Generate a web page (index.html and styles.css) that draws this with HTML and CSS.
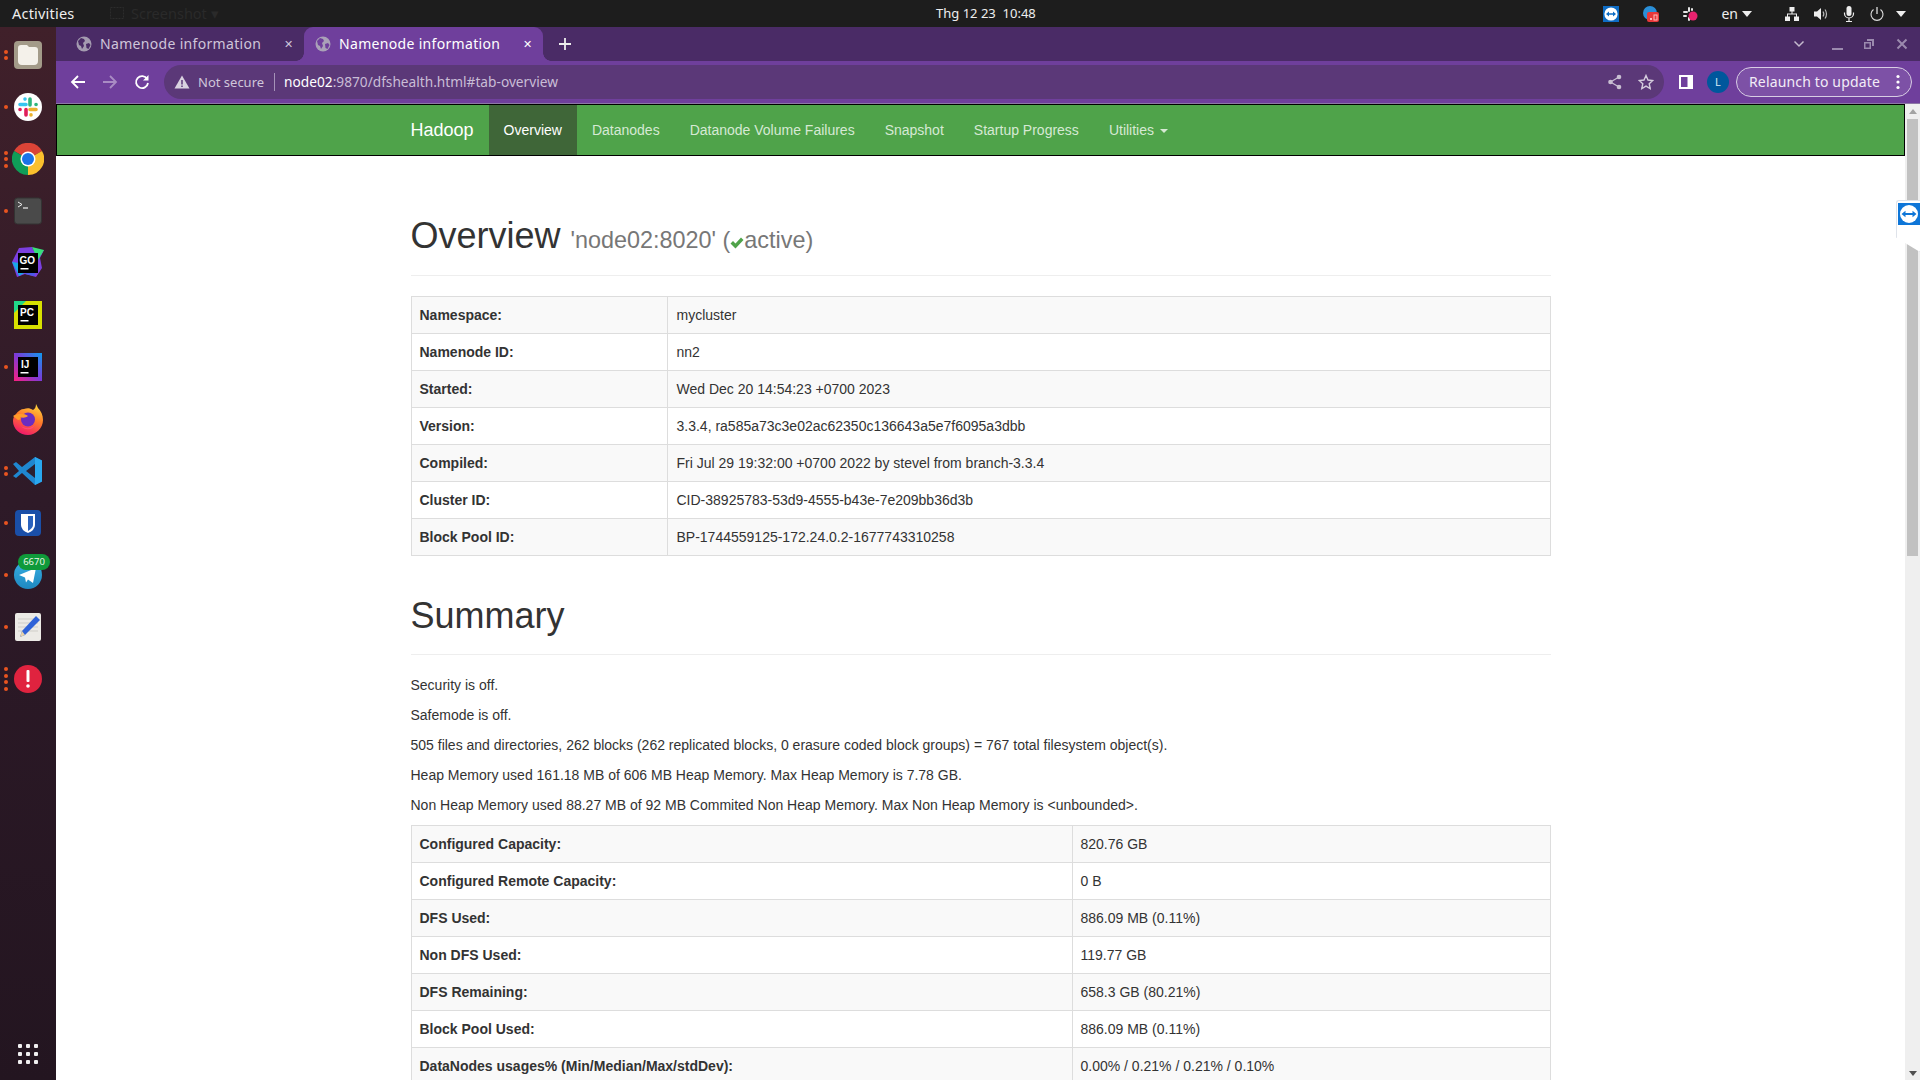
FILE: index.html
```html
<!DOCTYPE html>
<html lang="en">
<head>
    <meta charset="UTF-8">
    <title>Namenode information</title>
    <link rel="stylesheet" href="styles.css">
</head>
<body>
    <!-- gnome top bar -->
    <div class="topbar">
        <div class="top-left">
            <span class="activities">Activities</span>
            <span class="ghost-app">
                <svg width="16" height="16" viewBox="0 0 16 16"><rect x="1.5" y="2.5" width="13" height="11" fill="none" stroke="#2c2c2c" stroke-dasharray="2 1"/></svg>
                Screenshot &#9662;
            </span>
        </div>
        <div class="clock">Thg 12 23&nbsp;&nbsp;10:48</div>
        <div class="tray">
            <svg class="tray-tv" width="16" height="16" viewBox="0 0 16 16"><rect width="16" height="16" fill="#0e6cc4"/><circle cx="8" cy="8" r="6.6" fill="#fff"/><path d="M3 8l3-2.4v1.6h4V5.6L13 8l-3 2.4V8.800H6v1.600z" fill="#0e6cc4"/></svg>
            <svg class="tray-chat" width="16" height="18" viewBox="0 0 16 18"><circle cx="7" cy="8" r="7" fill="#2a8fd8"/><rect x="4" y="7" width="12" height="10" rx="2" fill="#e8383a"/><rect x="7" y="13" width="2" height="2" fill="#fbb"/><rect x="11" y="10" width="3" height="5" fill="none" stroke="#fbb"/></svg>
            <svg class="tray-slack" width="16" height="16" viewBox="0 0 16 16"><g fill="#e6e6e6"><rect x="1" y="5" width="5" height="2" rx="1"/><rect x="6" y="1" width="2" height="5" rx="1"/><rect x="1" y="9" width="4" height="2" rx="1"/><rect x="6" y="11" width="2" height="4" rx="1"/><rect x="9" y="2" width="2" height="3" rx="1"/></g><circle cx="11" cy="10" r="4.500" fill="#e8226e"/></svg>
            <span class="lang">en</span><span class="caret-w lang-caret"></span>
            <svg class="tray-net" width="16" height="16" viewBox="0 0 16 16" fill="#eee"><rect x="5.500" y="1" width="5" height="4.500"/><rect x="1" y="10.500" width="5" height="4.500"/><rect x="10" y="10.500" width="5" height="4.500"/><path d="M7.500 5h1v2.500H13V11h-1V8.500H4V11H3V7.500h4.500z"/></svg>
            <svg class="tray-sound" width="16" height="16" viewBox="0 0 16 16"><path d="M1 5.500h3L8 2v12l-4-3.500H1z" fill="#eee"/><path d="M10 5.500c1 1.500 1 3.500 0 5M12 3.500c2 2.500 2 6.500 0 9" fill="none" stroke="#bbb" stroke-width="1.200"/></svg>
            <svg class="tray-mic" width="14" height="18" viewBox="0 0 14 18"><rect x="4.500" y="1" width="5" height="10" rx="2.500" fill="#eee"/><path d="M2.500 7.500v1a4.500 4.500 0 0 0 9 0v-1M7 13v3.500M4 16.500h6" fill="none" stroke="#eee" stroke-width="1.200"/></svg>
            <svg class="tray-power" width="16" height="16" viewBox="0 0 16 16"><path d="M4.500 3.500a6 6 0 1 0 7 0" fill="none" stroke="#ddd" stroke-width="1.100"/><path d="M8 1v7" stroke="#eee" stroke-width="1.200"/></svg>
            <span class="caret-w power-caret"></span>
        </div>
    </div>

    <div class="desktop">
        <!-- launcher -->
        <nav class="dock">
            <div class="dock-item">
                <div class="dots"><i></i><i></i></div>
                <svg width="32" height="32" viewBox="0 0 32 32"><rect x="2" y="2" width="28" height="28" rx="4" fill="#a39b89"/><path d="M6 9q0-3 3-3h6l2 2h6q3 0 3 3v11q0 4-4 4H10q-4 0-4-4z" fill="#f4f1ea"/></svg>
            </div>
            <div class="dock-item">
                <div class="dots"><i></i></div>
                <svg width="32" height="32" viewBox="0 0 32 32"><circle cx="16" cy="16" r="14" fill="#fff"/><g stroke-width="3.600" stroke-linecap="round"><path d="M8 13.500h6M13 8v.1" stroke="#36c5f0"/><path d="M18 8v6M24 13.500h.1" stroke="#2eb67d"/><path d="M24 18.500h-6M19 24v-.1" stroke="#ecb22e"/><path d="M14 18.500V24M8 18.500h.1" stroke="#e01e5a"/></g></svg>
            </div>
            <div class="dock-item">
                <div class="dots"><i></i><i></i><i></i></div>
                <svg width="32" height="32" viewBox="0 0 32 32"><path d="M16 16L2.100 8A16 16 0 0 1 30 8z" fill="#db4437"/><path d="M16 16L2.100 8A16 16 0 0 0 16 32z" fill="#0f9d58"/><path d="M16 16L16 32A16 16 0 0 0 30 8z" fill="#fbc02d"/><circle cx="16" cy="16" r="7.500" fill="#fff"/><circle cx="16" cy="16" r="6" fill="#1a73e8"/></svg>
            </div>
            <div class="dock-item">
                <div class="dots"><i></i></div>
                <svg width="32" height="32" viewBox="0 0 32 32"><rect x="2.500" y="3" width="27" height="26" rx="3" fill="#4a4a4a" stroke="#333"/><path d="M6 7l4 2.500-4 2.500" fill="none" stroke="#eee"/><path d="M11 13h5" stroke="#eee" stroke-width="1.200"/></svg>
            </div>
            <div class="dock-item">
                <div class="dots"></div>
                <svg width="32" height="32" viewBox="0 0 32 32"><path d="M0 15L7 1l13-1 2 4 10-1-4 8 2 10-6 9-11-3-8 3z" fill="#7b3fe0"/><path d="M0 15l7 14 9-5-9-8z" fill="#18a8e8"/><path d="M20 0l12 3-6 10z" fill="#37e07a"/><path d="M26 20l-4 9-9-2z" fill="#4a5ae8"/><rect x="6" y="6" width="20" height="20" fill="#000"/><text class="jb-text" x="7.500" y="17">GO</text><rect x="8.500" y="21" width="8" height="1.500" fill="#fff"/></svg>
            </div>
            <div class="dock-item">
                <div class="dots"></div>
                <svg width="32" height="32" viewBox="0 0 32 32"><rect x="2" y="2" width="28" height="28" fill="#d7e000"/><path d="M2 2h12L2 14z" fill="#21d789"/><rect x="6" y="6" width="20" height="20" fill="#000"/><text class="jb-text" x="8" y="16.500">PC</text><rect x="8.500" y="21" width="8" height="1.500" fill="#fff"/></svg>
            </div>
            <div class="dock-item">
                <div class="dots"><i></i></div>
                <svg width="32" height="32" viewBox="0 0 32 32"><defs><linearGradient id="ij" x1="0" y1="1" x2="1" y2="0"><stop offset="0" stop-color="#fc1f7e"/><stop offset=".5" stop-color="#7c3ad8"/><stop offset="1" stop-color="#0d9bf0"/></linearGradient></defs><rect x="2" y="2" width="28" height="28" fill="url(#ij)"/><rect x="6" y="6" width="20" height="20" fill="#000"/><text class="jb-text" x="9" y="16.500">IJ</text><rect x="8.500" y="21" width="8" height="1.500" fill="#fff"/></svg>
            </div>
            <div class="dock-item">
                <div class="dots"></div>
                <svg width="32" height="32" viewBox="0 0 32 32"><defs><linearGradient id="ff" x1="0.700" y1="0" x2="0.300" y2="1"><stop offset="0" stop-color="#ffd23a"/><stop offset=".45" stop-color="#ff7a2a"/><stop offset="1" stop-color="#f0146e"/></linearGradient></defs><path d="M31 17c0-5-2-9-5-12l-2-4c0 3-1 5-3 6-3-2-6-2-9-1-3 0-6 2-8 5-2 2-3 4-3 7 0 8 7 14 15 14s15-7 15-15z" fill="url(#ff)"/><circle cx="16" cy="16.500" r="7" fill="#6a2cc0"/><path d="M1 13c5-3 11-3 15 0-2 2-6 2-8 1 1 2 0 3-2 3z" fill="#ff9a2a"/><path d="M9 23c4 3 10 3 14-1-2 5-10 6-14 1z" fill="#ff4a7a"/></svg>
            </div>
            <div class="dock-item">
                <div class="dots"><i></i><i></i></div>
                <svg width="32" height="32" viewBox="0 0 32 32"><path d="M23 2l7 3.500v21L23 30 10 18l-6 5-3-2 6-5-6-7 3-2 6 5z" fill="#1f87d0"/><path d="M23 2l7 3.500v21L23 30z" fill="#29a8f0"/><path d="M23 9v14l-9-7z" fill="#2b2030"/></svg>
            </div>
            <div class="dock-item">
                <div class="dots"><i></i></div>
                <svg width="32" height="32" viewBox="0 0 32 32"><rect x="3" y="3" width="26" height="26" rx="4" fill="#1a4fa8"/><path d="M9 7h14v11q0 5-7 8-7-3-7-8z" fill="#fff"/><path d="M16 9h5v9q0 3-5 6z" fill="#2a62bd"/></svg>
            </div>
            <div class="dock-item">
                <div class="dots"><i></i></div>
                <svg width="32" height="32" viewBox="0 0 32 32"><defs><linearGradient id="tg" x1="0" y1="0" x2="0" y2="1"><stop offset="0" stop-color="#37aee2"/><stop offset="1" stop-color="#1e88c0"/></linearGradient></defs><circle cx="16" cy="16" r="14" fill="url(#tg)"/><path d="M7 16l17-7-3 15-5-3.500-2 3-1-5z" fill="#fff"/></svg>
                <span class="dock-badge">6670</span>
            </div>
            <div class="dock-item">
                <div class="dots"><i></i></div>
                <svg width="32" height="32" viewBox="0 0 32 32"><rect x="3" y="2" width="26" height="28" rx="2" fill="#eceae6"/><path d="M6 8h20M6 12h20M6 16h20M6 20h20" stroke="#cfcdc8"/><path d="M24 5l4 4-15 15-5 2 2-6z" fill="#2f62d8"/><path d="M10 20l3 4-5 2z" fill="#e8d2a8"/></svg>
            </div>
            <div class="dock-item">
                <div class="dots"><i></i><i></i><i></i><i></i></div>
                <svg width="32" height="32" viewBox="0 0 32 32"><circle cx="16" cy="16" r="14" fill="#e0233f"/><rect x="14.500" y="7" width="3" height="12" rx="1" fill="#fff"/><circle cx="16" cy="23" r="1.800" fill="#fff"/></svg>
            </div>
            <div class="apps-grid">
                <i></i><i></i><i></i><i></i><i></i><i></i><i></i><i></i><i></i>
            </div>
        </nav>

        <div class="browser">
            <!-- chrome tabs -->
            <div class="tabstrip">
                <div class="tab">
                    <svg class="globe" width="16" height="16" viewBox="0 0 16 16"><circle cx="8" cy="8" r="7.500" fill="#a49bb0"/><path d="M2 5l3-3 3 1 1 2-2 2 1 3-2 3-1-3-2-1zM10 8l3-1 1.500 2-2 4-2-1z" fill="#4a2b66"/></svg>
                    <span class="tab-title">Namenode information</span>
                    <span class="tab-close">&#10005;</span>
                </div>
                <div class="tab active">
                    <svg class="globe" width="16" height="16" viewBox="0 0 16 16"><circle cx="8" cy="8" r="7.500" fill="#aaa1b8"/><path d="M2 5l3-3 3 1 1 2-2 2 1 3-2 3-1-3-2-1zM10 8l3-1 1.500 2-2 4-2-1z" fill="#6f3f9c"/></svg>
                    <span class="tab-title">Namenode information</span>
                    <span class="tab-close">&#10005;</span>
                </div>
                <svg class="new-tab" width="14" height="14" viewBox="0 0 14 14"><path d="M7 1v12M1 7h12" stroke="#eee" stroke-width="1.800"/></svg>
                <div class="win-controls">
                    <svg width="12" height="8" viewBox="0 0 12 8"><path d="M1.500 1.500L6 6l4.500-4.500" fill="none" stroke="#c5bace" stroke-width="1.500"/></svg>
                    <span class="win-min"></span>
                    <svg class="win-max" width="12" height="12" viewBox="0 0 12 12"><path d="M4 1h7v7H9V3H4z M1 4h7v7H1z M2.500 5.500v4h4v-4z" fill="#9b8aae" fill-rule="evenodd"/></svg>
                    <svg class="win-close" width="12" height="12" viewBox="0 0 12 12"><path d="M1.500 1.500l9 9M10.500 1.500l-9 9" stroke="#9b8aae" stroke-width="2"/></svg>
                </div>
            </div>

            <!-- toolbar -->
            <div class="toolbar">
                <svg class="tool back" width="16" height="16" viewBox="0 0 16 16"><path d="M15 8H2M8 2L2 8l6 6" fill="none" stroke="#fff" stroke-width="1.800"/></svg>
                <svg class="tool fwd" width="16" height="16" viewBox="0 0 16 16"><path d="M1 8h13M8 2l6 6-6 6" fill="none" stroke="#a98cc4" stroke-width="1.800"/></svg>
                <svg class="tool reload" width="16" height="16" viewBox="0 0 16 16"><path d="M13.200 5A6 6 0 1 0 14 9" fill="none" stroke="#fff" stroke-width="1.800"/><path d="M14.500 1v5.500H9z" fill="#fff"/></svg>
                <div class="omnibox">
                    <svg width="16" height="14" viewBox="0 0 16 14"><path d="M8 .5L15.500 13.500H.5z" fill="#d9d2e0"/><path d="M8 5v4.500M8 10.500v1.500" stroke="#5b3878" stroke-width="1.500"/></svg>
                    <span class="not-secure">Not secure</span>
                    <span class="omni-sep"></span>
                    <span class="url"><b>node02</b>:9870/dfshealth.html#tab-overview</span>
                    <svg class="omni-share" width="16" height="16" viewBox="0 0 16 16"><g fill="#c8bfd2"><circle cx="12" cy="3" r="2.300"/><circle cx="12" cy="13" r="2.300"/><circle cx="3.500" cy="8" r="2.300"/></g><path d="M12 3L3.500 8l8.500 5" fill="none" stroke="#c8bfd2" stroke-width="1.200"/></svg>
                    <svg class="omni-star" width="16" height="16" viewBox="0 0 16 16"><path d="M8 1.500l2 4.500 4.800.5-3.600 3.200 1 4.800L8 12.100l-4.200 2.400 1-4.800L1.200 6.500 6 6z" fill="none" stroke="#d5cddd" stroke-width="1.400"/></svg>
                </div>
                <svg class="side-panel" width="14" height="14" viewBox="0 0 14 14"><rect width="14" height="14" fill="#fff"/><rect x="2" y="2" width="6.500" height="10" fill="#6f3f9c"/></svg>
                <span class="avatar">L</span>
                <div class="relaunch">
                    <span>Relaunch to update</span>
                    <svg width="4" height="16" viewBox="0 0 4 16" fill="#fff"><circle cx="2" cy="2.500" r="1.600"/><circle cx="2" cy="8" r="1.600"/><circle cx="2" cy="13.500" r="1.600"/></svg>
                </div>
            </div>

            <!-- page -->
            <div class="viewport">
                <div class="page">
                    <header class="navbar">
                        <div class="container nav-inner">
                            <a class="brand" href="#">Hadoop</a>
                            <a class="nav-link current" href="#">Overview</a>
                            <a class="nav-link" href="#">Datanodes</a>
                            <a class="nav-link" href="#">Datanode Volume Failures</a>
                            <a class="nav-link" href="#">Snapshot</a>
                            <a class="nav-link" href="#">Startup Progress</a>
                            <a class="nav-link" href="#">Utilities <span class="caret"></span></a>
                        </div>
                    </header>

                    <main class="container content">
                        <div class="page-header">
                            <h1>Overview <small>'node02:8020' (<svg class="check" width="14" height="14" viewBox="0 0 14 14"><path d="M.5 7.500l2.500-2.500 2.500 2.500L11 1.500l2.500 2.500-8 8.500z" fill="#4fa34a"/></svg>active)</small></h1>
                        </div>
                        <table class="info-table overview-table">
                            <tr><th>Namespace:</th><td>mycluster</td></tr>
                            <tr><th>Namenode ID:</th><td>nn2</td></tr>
                            <tr><th>Started:</th><td>Wed Dec 20 14:54:23 +0700 2023</td></tr>
                            <tr><th>Version:</th><td>3.3.4, ra585a73c3e02ac62350c136643a5e7f6095a3dbb</td></tr>
                            <tr><th>Compiled:</th><td>Fri Jul 29 19:32:00 +0700 2022 by stevel from branch-3.3.4</td></tr>
                            <tr><th>Cluster ID:</th><td>CID-38925783-53d9-4555-b43e-7e209bb36d3b</td></tr>
                            <tr><th>Block Pool ID:</th><td>BP-1744559125-172.24.0.2-1677743310258</td></tr>
                        </table>

                        <div class="page-header">
                            <h1>Summary</h1>
                        </div>
                        <p>Security is off.</p>
                        <p>Safemode is off.</p>
                        <p>505 files and directories, 262 blocks (262 replicated blocks, 0 erasure coded block groups) = 767 total filesystem object(s).</p>
                        <p>Heap Memory used 161.18 MB of 606 MB Heap Memory. Max Heap Memory is 7.78 GB.</p>
                        <p>Non Heap Memory used 88.27 MB of 92 MB Commited Non Heap Memory. Max Non Heap Memory is &lt;unbounded&gt;.</p>
                        <table class="info-table summary-table">
                            <tr><th>Configured Capacity:</th><td>820.76 GB</td></tr>
                            <tr><th>Configured Remote Capacity:</th><td>0 B</td></tr>
                            <tr><th>DFS Used:</th><td>886.09 MB (0.11%)</td></tr>
                            <tr><th>Non DFS Used:</th><td>119.77 GB</td></tr>
                            <tr><th>DFS Remaining:</th><td>658.3 GB (80.21%)</td></tr>
                            <tr><th>Block Pool Used:</th><td>886.09 MB (0.11%)</td></tr>
                            <tr><th>DataNodes usages% (Min/Median/Max/stdDev):</th><td>0.00% / 0.21% / 0.21% / 0.10%</td></tr>
                        </table>
                    </main>
                </div>

                <div class="scrollbar">
                    <span class="arrow-up"></span>
                    <span class="thumb"></span>
                    <span class="arrow-down"></span>
                </div>

                <!-- teamviewer quick tab -->
                <div class="tv-tab">
                    <svg width="22" height="22" viewBox="0 0 22 22"><rect width="22" height="22" fill="#0e76d8"/><circle cx="11" cy="11" r="9" fill="#fff"/><path d="M3.500 11l4-3.200v2.200h7V7.800l4 3.200-4 3.200V12h-7v2.200z" fill="#0e76d8"/></svg>
                </div>
            </div>
        </div>
    </div>
</body>
</html>
```

FILE: styles.css
```css
html, body {
    margin: 0;
    padding: 0;
    height: 100%;
    overflow: hidden;
}
body {
    display: flex;
    flex-direction: column;
    font-family: "Liberation Sans", Arial, sans-serif;
    font-size: 14px;
    line-height: 1.42857143;
    color: #333;
    background: #fff;
}

/* top bar */
.topbar {
    flex: 0 0 27px;
    height: 27px;
    background: #1d1d1d;
    color: #eee;
    display: flex;
    align-items: center;
    justify-content: space-between;
    position: relative;
    font-family: "Noto Sans", sans-serif;
    font-size: 13.5px;
}
.top-left {
    display: flex;
    align-items: center;
    padding-left: 12px;
}
.activities {
    width: 97px;
    font-size: 14.5px;
    letter-spacing: .2px;
}
.ghost-app {
    display: flex;
    align-items: center;
    gap: 6px;
    color: #2a2a2a;
    font-size: 14.5px;
}
.clock {
    position: absolute;
    left: 936px;
    font-size: 13px;
}
.tray {
    display: flex;
    align-items: center;
    height: 27px;
    padding-right: 14px;
}
.tray-chat { margin-left: 24px; }
.tray-slack { margin-left: 23px; }
.lang { margin-left: 23px; font-size: 14px; }
.caret-w {
    width: 0;
    height: 0;
    border-left: 5px solid transparent;
    border-right: 5px solid transparent;
    border-top: 6px solid #eee;
}
.lang-caret { margin-left: 4px; }
.tray-net { margin-left: 32px; }
.tray-sound { margin-left: 13px; }
.tray-mic { margin-left: 13px; }
.tray-power { margin-left: 13px; }
.power-caret { margin-left: 11px; }

.desktop {
    flex: 1;
    display: flex;
    min-height: 0;
}

/* dock */
.dock {
    flex: 0 0 56px;
    width: 56px;
    padding-top: 2px;
    box-sizing: border-box;
    display: flex;
    flex-direction: column;
    background: linear-gradient(180deg, #40202a 0%, #2e1a28 45%, #231520 100%);
}
.dock-item {
    height: 52px;
    display: flex;
    align-items: center;
    position: relative;
}
.dots {
    width: 12px;
    display: flex;
    flex-direction: column;
    align-items: center;
    gap: 2.500px;
}
.dots i {
    width: 4px;
    height: 4px;
    border-radius: 50%;
    background: #e95420;
}
.dock-badge {
    position: absolute;
    left: 18px;
    top: 5px;
    width: 32px;
    height: 16px;
    border-radius: 8px;
    background: #0f9a3a;
    color: #e8f5e8;
    font-family: "Noto Sans", sans-serif;
    font-size: 9.5px;
    line-height: 16px;
    text-align: center;
}
.jb-text {
    font-family: "Liberation Sans", sans-serif;
    font-weight: bold;
    font-size: 10px;
    fill: #fff;
}
.apps-grid {
    margin-top: auto;
    margin-bottom: 16px;
    margin-left: 18px;
    display: grid;
    grid-template-columns: repeat(3, 4px);
    grid-auto-rows: 4px;
    gap: 4px;
}
.apps-grid i {
    background: #f0eff0;
    border-radius: 1px;
}

/* browser frame */
.browser {
    flex: 1;
    min-width: 0;
    display: flex;
    flex-direction: column;
}
.tabstrip {
    flex: 0 0 34px;
    background: #4a2b66;
    display: flex;
    align-items: stretch;
    padding-left: 9px;
    font-family: "Noto Sans", sans-serif;
    font-size: 14px;
}
.tab {
    width: 239px;
    box-sizing: border-box;
    display: flex;
    align-items: center;
    padding: 0 11px;
    color: #cfc5da;
    border-radius: 9px 9px 0 0;
}
.tab-title {
    letter-spacing: .32px;
}
.tab.active {
    background: #6f3f9c;
    color: #fff;
    position: relative;
}
/* curved feet of the active tab */
.tab.active::before,
.tab.active::after {
    content: "";
    position: absolute;
    bottom: 0;
    width: 8px;
    height: 8px;
}
.tab.active::before {
    left: -8px;
    background: radial-gradient(circle at 0 0, #4a2b66 7.5px, #6f3f9c 8px);
}
.tab.active::after {
    right: -8px;
    background: radial-gradient(circle at 100% 0, #4a2b66 7.5px, #6f3f9c 8px);
}
.globe { margin-right: 8px; }
.tab-close {
    margin-left: auto;
    margin-right: 0;
    font-size: 11px;
}
.new-tab {
    align-self: center;
    margin-left: 15px;
}
.win-controls {
    margin-left: auto;
    display: flex;
    align-items: center;
    padding-right: 12px;
}
.win-min {
    width: 11px;
    height: 2px;
    background: #9b8aae;
    margin: 10px 0 0 27px;
}
.win-max { margin-left: 20px; }
.win-close { margin-left: 21px; }

.toolbar {
    flex: 0 0 42px;
    height: 42px;
    background: #6f3f9c;
    border-bottom: 1px solid #8d78a5;
    display: flex;
    align-items: center;
    font-family: "Noto Sans", sans-serif;
}
.back { margin-left: 14px; }
.fwd { margin-left: 16px; }
.reload { margin-left: 16px; }
.omnibox {
    margin-left: 14px;
    width: 1500px;
    height: 34px;
    box-sizing: border-box;
    background: #5b3878;
    border-radius: 17px;
    display: flex;
    align-items: center;
    padding-left: 10px;
    font-size: 13.7px;
}
.not-secure {
    margin-left: 8px;
    color: #d0c6da;
    font-size: 13px;
}
.omni-sep {
    width: 1px;
    height: 18px;
    background: #a592b8;
    margin: 0 9px 0 10px;
}
.url { color: #c9bdd6; }
.url b { font-weight: normal; color: #fff; }
.omni-share { margin-left: auto; }
.omni-star { margin: 0 10px 0 15px; }
.side-panel { margin-left: 15px; }
.avatar {
    margin-left: 14px;
    width: 22px;
    height: 22px;
    border-radius: 50%;
    background: #00579c;
    color: #d8e8f4;
    font-size: 11px;
    line-height: 22px;
    text-align: center;
}
.relaunch {
    margin-left: 7px;
    width: 176px;
    height: 30px;
    box-sizing: border-box;
    border: 1px solid #d8cde4;
    border-radius: 15px;
    background: #7d51a6;
    color: #f2ecf7;
    display: flex;
    align-items: center;
    justify-content: space-between;
    padding: 0 11px 0 12px;
    font-size: 14px;
    letter-spacing: .15px;
}

/* page area */
.viewport {
    flex: 1;
    min-height: 0;
    display: flex;
    position: relative;
}
.page {
    flex: 1;
    min-width: 0;
    overflow: hidden;
}
.container {
    width: 1140px;
    margin: 0 auto;
}
.navbar {
    height: 52px;
    box-sizing: border-box;
    background: #4fa34a;
    border: 1px solid #000;
}
.nav-inner {
    display: flex;
    height: 50px;
}
.nav-inner a {
    text-decoration: none;
    line-height: 20px;
    padding: 15px;
    color: #d6e9d4;
}
.navbar .brand {
    font-size: 18px;
    color: #fff;
    padding-left: 0;
}
.navbar .current {
    background: #3f6638;
    color: #fff;
}
.caret {
    display: inline-block;
    width: 0;
    height: 0;
    margin-left: 2px;
    vertical-align: middle;
    border-top: 4px solid;
    border-left: 4px solid transparent;
    border-right: 4px solid transparent;
}

.content {
    padding-top: 20px;
}
.page-header {
    margin: 40px 0 20px;
    padding-bottom: 9px;
    border-bottom: 1px solid #eee;
}
h1 {
    margin: 20px 0 10px;
    font-size: 36px;
    font-weight: 500;
    line-height: 1.1;
}
h1 small {
    font-size: 65%;
    font-weight: 400;
    color: #777;
}
.check {
    vertical-align: -2px;
}
p {
    margin: 0 0 10px;
}
.info-table {
    width: 100%;
    border-collapse: collapse;
    margin-bottom: 20px;
    table-layout: fixed;
}
.info-table th,
.info-table td {
    border: 1px solid #ddd;
    padding: 8px;
    text-align: left;
    vertical-align: top;
}
.info-table tr:nth-child(odd) {
    background: #f9f9f9;
}
.overview-table th { width: 239px; }
.overview-table td { padding-left: 9px; }
.summary-table th { width: 644px; }

/* scrollbar */
.scrollbar {
    flex: 0 0 15px;
    background: #efefef;
    display: flex;
    flex-direction: column;
    align-items: center;
}
.arrow-up {
    margin-top: 5px;
    border-left: 4px solid transparent;
    border-right: 4px solid transparent;
    border-bottom: 5px solid #a3a3a3;
}
.thumb {
    width: 11px;
    height: 437px;
    margin-top: 5px;
    background: #c1c1c1;
}
.arrow-down {
    margin-top: auto;
    margin-bottom: 4px;
    border-left: 4px solid transparent;
    border-right: 4px solid transparent;
    border-top: 5px solid #505050;
}
.tv-tab {
    position: absolute;
    top: 96px;
    right: 0;
    width: 24px;
    height: 52px;
    box-sizing: border-box;
    padding: 2px 0 0 1px;
    background: #fff;
    border: 1px solid #dfe3ea;
    border-right: none;
    border-radius: 3px 0 0 3px;
    clip-path: polygon(0 0, 100% 0, 100% 100%, 0 72%);
}
.tv-tab svg { display: block; }
```
